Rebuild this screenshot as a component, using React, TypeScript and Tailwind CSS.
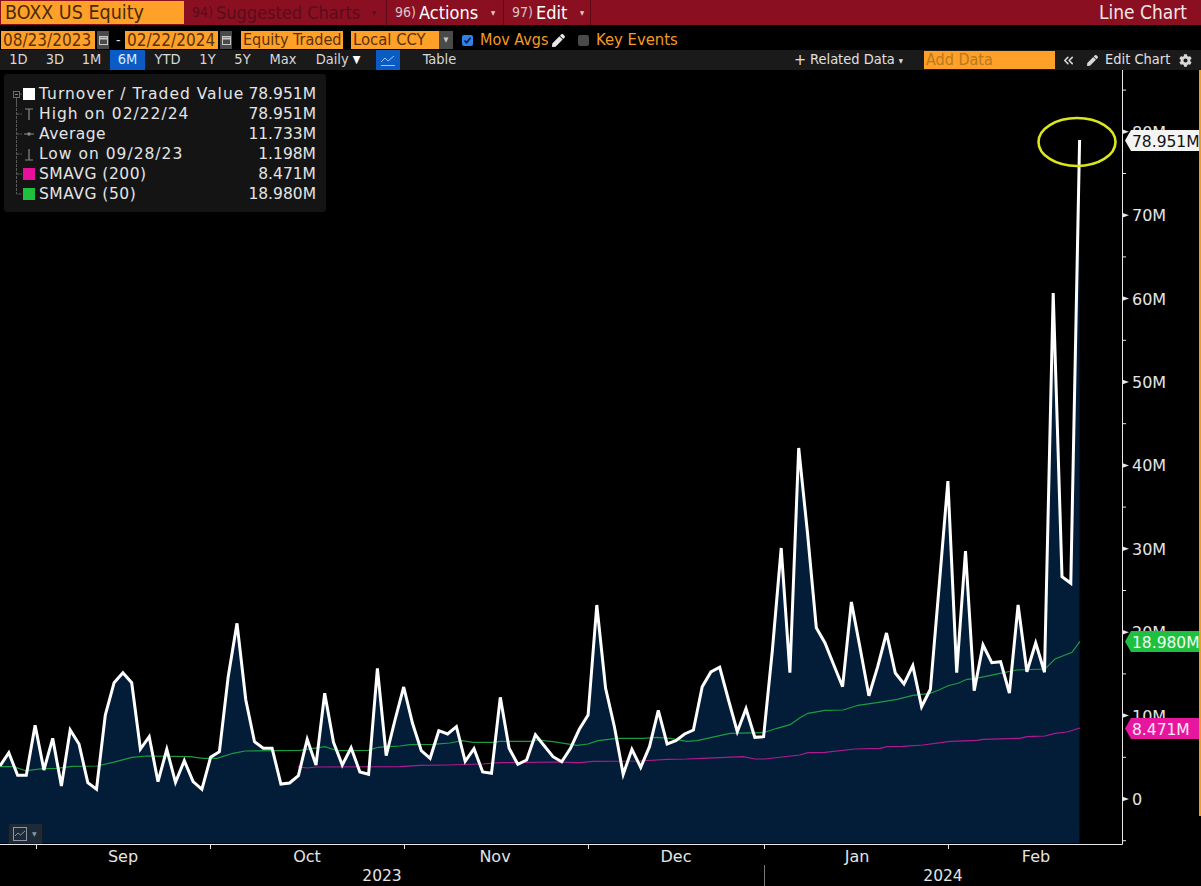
import { ChevronsLeft } from 'lucide-react'
import { FaCog, FaPen } from 'react-icons/fa'

const STEP = 8.777

// daily turnover, in page pixels (one point per trading day)
const TURNOVER = [
  766, 752.7, 775.3, 775.3, 725.3, 770, 738.3, 786, 730, 744, 782.7, 789.3, 715, 682.7, 672.7, 682.7,
  749, 736.7, 781.7, 749.3, 782.3, 760.7, 781.7, 789.3, 757.3, 751.7, 676.7, 623.3, 700, 741.7, 748.3,
  748.3, 784, 783, 775.7, 739.3, 765, 693.3, 742.3, 765, 747.7, 772, 774.3, 668.3, 755.7, 720, 687,
  723.3, 750.7, 758.3, 730.7, 734, 726.7, 761.3, 748.7, 772, 773.3, 697.3, 748.3, 764.3, 760, 734.7,
  745.7, 756.7, 761.7, 748.3, 729.3, 715, 605, 688.3, 726.7, 774.3, 749.3, 767.3, 746.7, 710.3, 744,
  740.7, 734, 730, 686.7, 672, 667.3, 700, 731.7, 708.7, 737.3, 736.7, 650, 548, 672.7, 448, 533, 627.7,
  643, 665, 686.7, 602, 648, 695.7, 666.7, 633, 673, 684, 665.7, 706.7, 689.3, 586.7, 481, 672.7, 551,
  690.7, 645, 662.7, 661.7, 693, 605, 671.7, 643, 672.3, 293, 576.7, 583.3, 140,
]

const SMA50 = [
  [0, 766.7], [13, 766.7], [26, 770.7], [43, 768.7], [57, 768.3], [72, 766.3], [97, 766], [113, 762.3],
  [132, 757.3], [147, 756], [190, 756.7], [203, 758.3], [217, 758.3], [233, 753.3], [245, 751], [300, 750.3],
  [325, 746.7], [337, 750.7], [368, 750.3], [378, 747.3], [400, 746], [410, 744.7], [433, 744.3], [450, 743],
  [462, 740.7], [473, 742.3], [493, 742.3], [500, 741.3], [530, 741.3], [537, 740], [553, 741.7], [577, 745.3],
  [588, 744], [598, 740.7], [617, 738.3], [643, 738.3], [657, 737.3], [670, 738.3], [687, 741.3], [697, 740.7],
  [730, 733.3], [763, 732.7], [777, 728.3], [790, 724.7], [800, 717.7], [808, 713.3], [825, 710.3], [843, 710],
  [858, 705.3], [877, 702.7], [897, 699.3], [913, 695.3], [930, 693.3], [939, 690], [948, 685.7], [958, 683.3],
  [967, 679.3], [975, 678.7], [1000, 673.3], [1017, 670], [1045, 669], [1055, 659], [1072, 652.3], [1080, 641.3],
]

const SMA200 = [
  [298, 766.7], [307, 768], [317, 767], [400, 766.7], [420, 765.3], [447, 765], [483, 764], [500, 762.7],
  [557, 762], [580, 762.7], [593, 761.3], [640, 761], [667, 759.3], [687, 759], [702, 758.3], [743, 756.7],
  [755, 759], [765, 759], [800, 755], [808, 752.7], [825, 752.3], [855, 749], [880, 748.3], [887, 746.7],
  [903, 746.3], [923, 745], [950, 741.3], [977, 740.3], [983, 739.3], [1020, 738.3], [1027, 736.7], [1045, 736],
  [1055, 733.3], [1067, 732], [1080, 728],
]

const toPath = (pts: number[][]) => pts.map(([x, y]) => `${x},${y}`).join(' ')
const turnoverPts = TURNOVER.map((y, i) => [+(i * STEP).toFixed(1), y])

const yFor = (m: number) => 799 - 8.34 * m
const MAJOR = [0, 10, 20, 30, 40, 50, 60, 70, 80]
const MINOR = [-5, 5, 15, 25, 35, 45, 55, 65, 75, 85]
const MONTHS: [string, number][] = [
  ['Sep', 123], ['Oct', 307], ['Nov', 495], ['Dec', 676], ['Jan', 857], ['Feb', 1036],
]
const X_TICKS = [36, 210, 404, 588, 764, 948]

const narrow = "font-['DejaVu_Sans_Condensed','DejaVu_Sans',sans-serif]"

function Prefixed({ num, label, dim, w, labelW }: { num: string; label: string; dim?: boolean; w: string; labelW: string }) {
  const tone = dim ? 'text-[#5a0c1c]' : 'text-white'
  return (
    <div className={`flex items-center h-full pl-[8px] border-r border-[#5c0a16] ${w}`}>
      <span className={`w-[24px] text-[14px] ${dim ? 'text-[#5a0c1c]' : 'text-[#d9c6c8]'}`}>{num}</span>
      <span className={`text-[18px] whitespace-nowrap ${labelW} ${tone}`}>{label}</span>
      <span className={`text-[6px] ml-[8px] ${dim ? 'text-[#5a0c1c]' : 'text-[#e6d0d0]'}`}>▼</span>
    </div>
  )
}

function Calendar() {
  return (
    <div className="w-[12px] h-[18px] bg-[#4a4a4a] flex items-center justify-center">
      <svg width="9" height="10" viewBox="0 0 9 10" fill="none" stroke="#c8c8c8">
        <rect x="0.5" y="1.5" width="8" height="8" />
        <path d="M0.5 3.500h8" strokeWidth="2" />
      </svg>
    </div>
  )
}

function OrangeField({ children, w, size }: { children: string; w: string; size: string }) {
  return (
    <div className={`h-[18px] bg-[#ffa028] text-[#5a3208] leading-[18px] pl-[2px] whitespace-nowrap overflow-hidden ${size} ${w}`}>
      {children}
    </div>
  )
}

function Tab({ label, w, active }: { label: string; w: string; active?: boolean }) {
  return (
    <div className={`h-full flex items-center justify-center text-[14.5px] ${w} ${active ? 'bg-[#0a5cc4] text-[#dbe8ff]' : 'text-[#d8d8d8]'}`}>
      {label}
    </div>
  )
}

function LegendRow({ kind, label, value, last, tight }: { kind: string; label: string; value: string; last?: boolean; tight?: boolean }) {
  return (
    <div className="flex items-center h-[20px] pl-[3px] pr-[10px] text-[15.5px] leading-[20px] text-[#e4e4e4]">
      <svg width="32" height="20" viewBox="0 0 32 20" className="shrink-0">
        <path d={last ? 'M9.5 0V10H15' : 'M9.5 0V20M9.5 10H15'} stroke="#5a5a5a" fill="none" strokeDasharray={kind === 'root' ? undefined : '3 1'} />
        {kind === 'root' && (
          <>
            <rect x="0" y="0" width="20" height="8" fill="#141414" />
            <path d="M9.5 14V20" stroke="#5a5a5a" />
            <rect x="6.5" y="7.5" width="6" height="6" fill="#141414" stroke="#6a6a6a" />
            <path d="M8 10.500h3" stroke="#8a8a8a" />
            <rect x="16" y="4" width="12" height="12" fill="#fff" />
          </>
        )}
        {kind === 'high' && <path d="M18 5h8M22 5v11" stroke="#8a8a8a" strokeWidth="1.2" fill="none" />}
        {kind === 'avg' && (
          <>
            <path d="M17 10h10" stroke="#8a8a8a" />
            <circle cx="22" cy="10" r="1.8" fill="#8a8a8a" />
          </>
        )}
        {kind === 'low' && <path d="M18 16h8M22 16V5" stroke="#8a8a8a" strokeWidth="1.2" fill="none" />}
        {kind === 'pink' && <rect x="16" y="4" width="12" height="12" fill="#e6109b" />}
        {kind === 'green' && <rect x="16" y="4" width="12" height="12" fill="#1fbf3f" />}
      </svg>
      <span className={`flex-1 whitespace-nowrap ${tight ? 'tracking-[0.5px]' : 'tracking-[1px]'}`}>{label}</span>
      <span>{value}</span>
    </div>
  )
}

function Tag({ y, text, bg, color, w = 75 }: { y: number; text: string; bg: string; color: string; w?: number }) {
  const x0 = 1125
  const x1 = x0 + w
  return (
    <g>
      <polygon points={`${x0},${y} ${x0 + 6},${y - 10.5} ${x1},${y - 10.5} ${x1},${y + 10.5} ${x0 + 6},${y + 10.5}`} fill={bg} />
      <text x={1132} y={y + 6} fill={color} className="text-[15.5px]">
        {text}
      </text>
    </g>
  )
}

export default function App() {
  const areaPts = `0,843 ${toPath(turnoverPts)} 1079.5,843`
  return (
    <div className="w-[1201px] h-[886px] bg-black flex flex-col overflow-hidden font-['DejaVu_Sans',sans-serif]">
      {/* top red bar */}
      <div className={`h-[25px] shrink-0 bg-[#8a0f20] flex items-center ${narrow}`}>
        <div className="w-[183px] h-[23px] ml-[1px] bg-[#ffa028] text-[#4a2a05] text-[19.500px] leading-[23px] pl-[4px]">BOXX US Equity</div>
        <Prefixed num="94)" label="Suggested Charts" dim w="w-[203px]" labelW="w-[148px]" />
        <Prefixed num="96)" label="Actions" w="w-[117px]" labelW="w-[64px]" />
        <Prefixed num="97)" label="Edit" w="w-[87px]" labelW="w-[36px]" />
        <div className="flex-1 text-right pr-[14px] text-[19px] text-[#f2e6e6]">Line Chart</div>
      </div>

      {/* date and mode row */}
      <div className={`h-[25px] shrink-0 flex items-center pt-[5px] ${narrow}`}>
        <div className="ml-[1px] flex items-center gap-[2px]">
          <OrangeField w="w-[94px]" size="text-[17px]">08/23/2023</OrangeField>
          <Calendar />
        </div>
        <span className="ml-[7px] w-[9px] text-[14px] text-[#e0e0e0]">-</span>
        <div className="flex items-center gap-[2px]">
          <OrangeField w="w-[93px]" size="text-[17px]">02/22/2024</OrangeField>
          <Calendar />
        </div>
        <div className="ml-[9px]">
          <OrangeField w="w-[102px]" size="text-[16px]">Equity Traded</OrangeField>
        </div>
        <div className="ml-[8px] flex items-center">
          <OrangeField w="w-[88px]" size="text-[16.500px]">Local CCY</OrangeField>
          <div className="w-[14px] h-[18px] bg-[#4a4a4a] flex items-center justify-center text-[7px] text-[#c8c8c8]">▼</div>
        </div>
        <div className="ml-[9px] w-[11px] h-[11px] bg-[#2f80e8] rounded-[2px] flex items-center justify-center">
          <svg width="9" height="9" viewBox="0 0 9 9" fill="none" stroke="#0a1830" strokeWidth="1.6">
            <path d="M1.500 4.500l2 2.200 4-5" />
          </svg>
        </div>
        <span className="ml-[7px] w-[72px] text-[16px] text-[#f59a23] whitespace-nowrap">Mov Avgs</span>
        <FaPen className="text-[#e6e6e6] text-[13px]" />
        <div className="ml-[13px] w-[11px] h-[11px] bg-[#4a4a4a] rounded-[2px]" />
        <span className="ml-[7px] text-[16.500px] text-[#f59a23] whitespace-nowrap">Key Events</span>
      </div>

      {/* range tabs */}
      <div className={`h-[20px] shrink-0 bg-[#1a1a1a] flex items-center ${narrow}`}>
        <Tab label="1D" w="w-[37px]" />
        <Tab label="3D" w="w-[36px]" />
        <Tab label="1M" w="w-[37px]" />
        <Tab label="6M" w="w-[35px]" active />
        <Tab label="YTD" w="w-[45px]" />
        <Tab label="1Y" w="w-[35px]" />
        <Tab label="5Y" w="w-[35px]" />
        <Tab label="Max" w="w-[46px]" />
        <div className="h-full w-[64px] flex items-center justify-center gap-[4px] text-[14.500px] text-[#d8d8d8]">
          Daily <span className="text-[11px] text-white">▼</span>
        </div>
        <div className="ml-[6px] w-[24px] h-full bg-[#0a5cc4] flex items-center justify-center">
          <svg width="16" height="13" viewBox="0 0 16 13" fill="none" stroke="#9cc4f5">
            <path d="M1 8l4-4 3 3 6-5M1 11.500h14" />
          </svg>
        </div>
        <Tab label="Table" w="w-[79px]" />
        <div className="flex-1" />
        <div className="flex items-center gap-[4px] w-[137px] pl-[7px] text-[14.500px] text-[#e0e0e0] whitespace-nowrap">
          <span className="text-[16px] leading-none">+</span> Related Data <span className="text-[6px]">▼</span>
        </div>
        <div className="w-[131px] h-[18px] bg-[#ffa028] text-[#b87a1e] text-[16px] leading-[18px] pl-[2px]">Add Data</div>
        <ChevronsLeft className="ml-[6px] text-[#d8d8d8]" size={15} strokeWidth={2.5} />
        <FaPen className="ml-[11px] text-[#d8d8d8] text-[11px]" />
        <span className="ml-[7px] w-[64px] text-[14.500px] text-[#e0e0e0] whitespace-nowrap">Edit Chart</span>
        <FaCog className="ml-[10px] mr-[9px] text-[#d8d8d8] text-[13px]" />
      </div>

      {/* chart */}
      <div className="relative flex-1">
        <svg viewBox="0 70 1201 816" width="1201" height="816" className="block">
          <polygon points={areaPts} fill="#031c38" />
          <polyline points={toPath(SMA200)} fill="none" stroke="#b01a90" strokeWidth="1.2" />
          <polyline points={toPath(SMA50)} fill="none" stroke="#1c9c42" strokeWidth="1.2" />
          <polyline points={toPath(turnoverPts)} fill="none" stroke="#fff" strokeWidth="3" />

          {/* axes */}
          <path d="M1122.500 70V844.500H0" fill="none" stroke="#e8e8e8" />
          <rect x="1199" y="70" width="2" height="746" fill="#f59a23" />
          {MINOR.map((m) => (
            <path key={m} d={`M1122 ${yFor(m)}H1126`} stroke="#e8e8e8" />
          ))}
          {MAJOR.map((m) => (
            <g key={m}>
              <polygon points={`1122,${yFor(m) - 2.5} 1129,${yFor(m)} 1122,${yFor(m) + 2.5}`} fill="#e8e8e8" />
              <text x="1132" y={yFor(m) + 6} fill="#e4e4e4" className="text-[16px]">
                {m === 0 ? '0' : `${m}M`}
              </text>
            </g>
          ))}
          {X_TICKS.map((x) => (
            <path key={x} d={`M${x}.5 844V849`} stroke="#e8e8e8" />
          ))}
          {MONTHS.map(([label, x]) => (
            <text key={label} x={x} y="862" textAnchor="middle" fill="#e4e4e4" className="text-[16px]">
              {label}
            </text>
          ))}
          <path d="M764.500 865V886" stroke="#777" />
          <text x="382" y="881" textAnchor="middle" fill="#e4e4e4" className="text-[15.5px]">2023</text>
          <text x="943" y="881" textAnchor="middle" fill="#e4e4e4" className="text-[15.5px]">2024</text>

          <Tag y={140.5} text="78.951M" bg="#f4f4f4" color="#111" w={74} />
          <Tag y={641.5} text="18.980M" bg="#1fbf3f" color="#f0fff0" w={74} />
          <Tag y={728.5} text="8.471M" bg="#e6169f" color="#ffeaf8" w={74} />

          <ellipse cx="1077" cy="142" rx="38.5" ry="24" fill="none" stroke="#dbe61c" strokeWidth="2.6" />
        </svg>

        {/* legend */}
        <div className="absolute left-[4px] top-[4px] w-[322px] h-[138px] pt-[10px] bg-[#141414] rounded-[3px]">
          <LegendRow kind="root" label="Turnover / Traded Value" value="78.951M" />
          <LegendRow kind="high" label="High on 02/22/24" value="78.951M" />
          <LegendRow kind="avg" label="Average" value="11.733M" tight />
          <LegendRow kind="low" label="Low on 09/28/23" value="1.198M" />
          <LegendRow kind="pink" label="SMAVG (200)" value="8.471M" tight />
          <LegendRow kind="green" label="SMAVG (50)" value="18.980M" last tight />
        </div>

        {/* chart type picker */}
        <div className="absolute left-[8px] top-[753px] w-[35px] h-[21px] bg-[#1e2a38] border border-[#121a24] flex items-center pl-[4px] gap-[5px]">
          <svg width="14" height="14" viewBox="0 0 14 14" fill="none" stroke="#8b98a6">
            <rect x="0.5" y="0.5" width="13" height="13" />
            <path d="M2 9l3-3 2.500 2L12 4" />
          </svg>
          <span className="text-[6px] text-[#8b98a6]">▼</span>
        </div>
      </div>
    </div>
  )
}
